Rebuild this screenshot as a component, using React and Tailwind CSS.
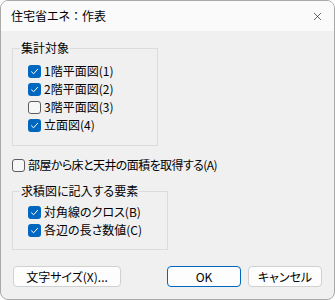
import { X } from 'lucide-react';

const font = "font-['Noto_Sans_CJK_JP','Noto_Sans',sans-serif] [font-feature-settings:'palt']";

const Check = ({ checked }) => {
  if (!checked) {
    return <span className="box-border h-[13px] w-[13px] shrink-0 rounded-[3px] border border-[#5d5d5d] bg-[#f7f7f7]" />;
  }
  return (
    <span className="flex h-[13px] w-[13px] shrink-0 items-center justify-center rounded-[3px] bg-[#0067c0]">
      <svg width="9" height="9" viewBox="0 0 9 9" fill="none">
        <path d="M1.5 4.8 L3.6 6.8 L7.6 2.3" stroke="white" strokeWidth="1" strokeLinecap="round" strokeLinejoin="round" />
      </svg>
    </span>
  );
};

const Row = ({ checked, className = '', children }) => (
  <div className="flex h-[18px] items-center gap-[3px]">
    <Check checked={checked} />
    <span className={`leading-[18px] ${className}`}>{children}</span>
  </div>
);

const Group = ({ title, className, children }) => (
  <div className={`relative box-border border border-[#dcdcdc] ${className}`}>
    <span className="absolute -top-[9px] left-[7px] bg-[#f0f0f0] px-[1px] leading-[16px]">{title}</span>
    {children}
  </div>
);

const Button = ({ primary, className, children }) => (
  <button
    className={`box-border h-[21px] rounded-[4px] border bg-[#fdfdfd] text-[12px] leading-[18px] text-black ${
      primary ? 'border-[#0067c0]' : 'border-[#d0d0d0]'
    } ${className}`}
  >
    {children}
  </button>
);

export default function App() {
  return (
    <div className={`${font} h-[300px] w-[335px] bg-white text-[12px] text-black`}>
      <div className="box-border flex h-[300px] w-[335px] flex-col overflow-hidden rounded-[8px] border border-[#a9a9a9] bg-[#f0f0f0]">
        {/* Title bar */}
        <div className="flex h-[30px] shrink-0 items-center justify-between bg-[#fafafa] pl-[10px] pr-[10px]">
          <span className="leading-[16px]">
            住宅省エネ<span className="[font-feature-settings:normal]">：</span>作表
          </span>
          <X size={13} strokeWidth={1.2} className="text-[#1a1a1a]" />
        </div>

        {/* Body */}
        <div className="flex flex-col pl-[11px]">
          <Group title="集計対象" className="mt-[17px] h-[98px] w-[146px] pl-[15px] pt-[13px]">
            <Row checked>1階平面図(1)</Row>
            <Row checked>2階平面図(2)</Row>
            <Row>3階平面図(3)</Row>
            <Row checked>立面図(4)</Row>
          </Group>

          <div className="mt-[10px]">
            <Row className="tracking-[-0.6px]">部屋から床と天井の面積を取得する(A)</Row>
          </div>

          <Group title="求積図に記入する要素" className="mt-[17px] h-[59px] w-[156px] pl-[15px] pt-[11px]">
            <Row checked>対角線のクロス(B)</Row>
            <Row checked>各辺の長さ数値(C)</Row>
          </Group>

          <div className="mt-[16px] flex items-center pl-[1px]">
            <Button className="w-[108px]">文字サイズ(X)...</Button>
            <Button primary className="ml-[46px] w-[74px]">OK</Button>
            <Button className="ml-[7px] w-[74px]">キャンセル</Button>
          </div>
        </div>
      </div>
    </div>
  );
}
